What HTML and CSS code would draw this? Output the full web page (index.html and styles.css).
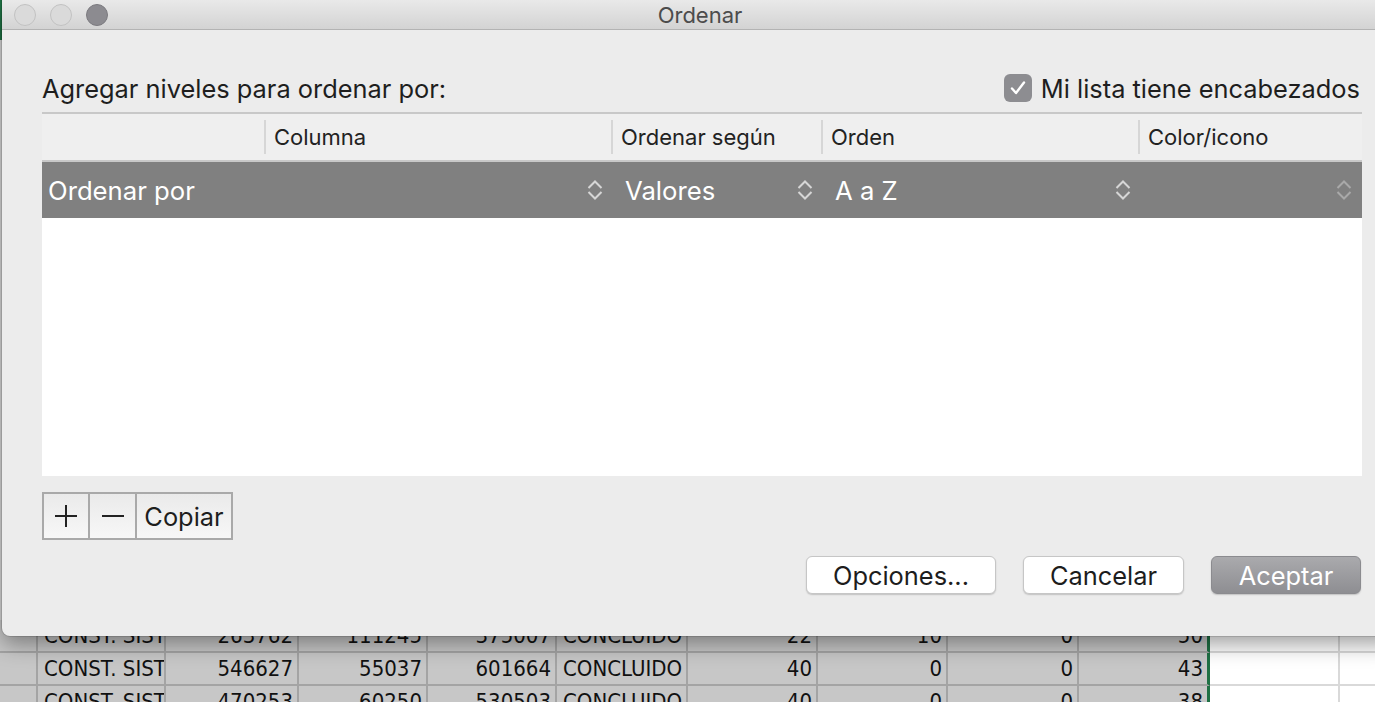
FILE: index.html
```html
<!DOCTYPE html>
<html lang="es">
<head>
<meta charset="utf-8">
<title>Ordenar</title>
<link rel="stylesheet" href="styles.css">
</head>
<body>
<div class="sheet">
  <div class="grid-row">
    <div class="cell"></div>
    <div class="cell">CONST. SIST</div>
    <div class="cell num">263762</div>
    <div class="cell num">111245</div>
    <div class="cell num">375007</div>
    <div class="cell">CONCLUIDO</div>
    <div class="cell num">22</div>
    <div class="cell num">10</div>
    <div class="cell num">0</div>
    <div class="cell num edge">50</div>
    <div class="cell blank"></div>
    <div class="cell blank"></div>
  </div>
  <div class="grid-row">
    <div class="cell"></div>
    <div class="cell">CONST. SIST</div>
    <div class="cell num">546627</div>
    <div class="cell num">55037</div>
    <div class="cell num">601664</div>
    <div class="cell">CONCLUIDO</div>
    <div class="cell num">40</div>
    <div class="cell num">0</div>
    <div class="cell num">0</div>
    <div class="cell num edge">43</div>
    <div class="cell blank"></div>
    <div class="cell blank"></div>
  </div>
  <div class="grid-row">
    <div class="cell"></div>
    <div class="cell">CONST. SIST</div>
    <div class="cell num">470253</div>
    <div class="cell num">60250</div>
    <div class="cell num">530503</div>
    <div class="cell">CONCLUIDO</div>
    <div class="cell num">40</div>
    <div class="cell num">0</div>
    <div class="cell num">0</div>
    <div class="cell num edge">38</div>
    <div class="cell blank"></div>
    <div class="cell blank"></div>
  </div>
</div>

<div class="dialog">
  <div class="titlebar">
    <div class="lights">
      <span class="light"></span>
      <span class="light"></span>
      <span class="light dark"></span>
    </div>
    <div class="title">Ordenar</div>
    <div></div>
  </div>
  <div class="content">
    <div class="top-row">
      <span class="label">Agregar niveles para ordenar por:</span>
      <span class="check">
        <span class="box">
          <svg width="20" height="20" viewBox="0 0 20 20"><path d="M4 10.5 L8 15 L16 4.5" fill="none" stroke="#fff" stroke-width="2.4" stroke-linecap="round" stroke-linejoin="round"/></svg>
        </span>
        <span>Mi lista tiene encabezados</span>
      </span>
    </div>
    <div class="table">
      <div class="thead">
        <div class="th first"></div>
        <div class="th">Columna</div>
        <div class="th">Ordenar según</div>
        <div class="th">Orden</div>
        <div class="th">Color/icono</div>
      </div>
      <div class="trow">
        <div class="td first">
          <span>Ordenar por</span>
          <svg class="chev" width="16" height="22" viewBox="0 0 16 22"><path d="M1.5 9 L8 2.5 L14.5 9 M1.5 13 L8 19.5 L14.5 13" fill="none" stroke="currentColor" stroke-width="2"/></svg>
        </div>
        <div class="td">
          <span>Valores</span>
          <svg class="chev" width="16" height="22" viewBox="0 0 16 22"><path d="M1.5 9 L8 2.5 L14.5 9 M1.5 13 L8 19.5 L14.5 13" fill="none" stroke="currentColor" stroke-width="2"/></svg>
        </div>
        <div class="td third">
          <span>A a Z</span>
          <svg class="chev" width="16" height="22" viewBox="0 0 16 22"><path d="M1.5 9 L8 2.5 L14.5 9 M1.5 13 L8 19.5 L14.5 13" fill="none" stroke="currentColor" stroke-width="2"/></svg>
        </div>
        <div class="td last">
          <span></span>
          <svg class="chev dim" width="16" height="22" viewBox="0 0 16 22"><path d="M1.5 9 L8 2.5 L14.5 9 M1.5 13 L8 19.5 L14.5 13" fill="none" stroke="currentColor" stroke-width="2"/></svg>
        </div>
      </div>
      <div class="tbody"></div>
    </div>
    <div class="seg">
      <div class="seg-btn plus">
        <svg width="24" height="24" viewBox="0 0 24 24"><path d="M12 1 V23 M1 12 H23" stroke="#222" stroke-width="2"/></svg>
      </div>
      <div class="seg-btn minus">
        <svg width="24" height="24" viewBox="0 0 24 24"><path d="M1 12 H23" stroke="#222" stroke-width="2"/></svg>
      </div>
      <div class="seg-btn copy">Copiar</div>
    </div>
    <div class="actions">
      <div class="btn opt">Opciones...</div>
      <div class="btn cancel">Cancelar</div>
      <div class="btn primary">Aceptar</div>
    </div>
  </div>
</div>
</body>
</html>
```

FILE: styles.css
```css
html, body {
  margin: 0;
  padding: 0;
}

body {
  width: 1375px;
  height: 702px;
  overflow: hidden;
  position: relative;
  font-family: Inter, "Liberation Sans", sans-serif;
  background: #ffffff;
}

/* background spreadsheet */
.sheet {
  height: 702px;
  box-sizing: border-box;
  padding-top: 620px;
  background: linear-gradient(#1f7244 0, #1f7244 40px, #d8d8d8 40px, #d8d8d8 100%);
}

.grid-row {
  display: grid;
  grid-template-columns: 38px 128px 133px 129px 129px 131px 130px 130px 131px 131px 130px 130px;
  height: 33px;
}

.cell {
  box-sizing: border-box;
  border-right: 2px solid #a4a4a4;
  border-bottom: 2px solid #a4a4a4;
  background: #c7c7c7;
  font-family: "Liberation Sans Narrow", "DejaVu Sans Condensed", "Liberation Sans", sans-serif;
  font-size: 22px;
  line-height: 31px;
  padding: 0 4px 0 6px;
  overflow: hidden;
  white-space: nowrap;
  color: #111111;
}

.cell.num {
  text-align: right;
}

.cell.edge {
  border-right: 3px solid #1f7145;
}

.cell.blank {
  background: #ffffff;
  border-color: #d9d9d9;
}

/* dialog window */
.dialog {
  position: absolute;
  left: 2px;
  top: 0;
  width: 1396px;
  height: 636px;
  background: #ececec;
  border-radius: 0 0 8px 8px;
  box-shadow: 0 8px 22px rgba(0, 0, 0, 0.38), 0 0 0 1px rgba(0, 0, 0, 0.12);
  display: flex;
  flex-direction: column;
  overflow: hidden;
  color: #1e1e1e;
}

.titlebar {
  height: 29px;
  flex: none;
  border-bottom: 1px solid #b3b3b3;
  background: linear-gradient(#e9e9e9, #d3d3d3);
  display: grid;
  grid-template-columns: 1fr auto 1fr;
  align-items: center;
}

.lights {
  display: flex;
  gap: 14px;
  padding-left: 12px;
}

.light {
  width: 20px;
  height: 20px;
  border-radius: 50%;
  background: #dadada;
  border: 1px solid #c2c2c2;
}

.light.dark {
  background: #8c8b90;
  border-color: #7b7a7f;
}

.title {
  font-size: 22px;
  color: #4c4c4c;
}

.content {
  display: flex;
  flex-direction: column;
  padding: 0 36px 0 40px;
}

.top-row {
  display: flex;
  justify-content: space-between;
  align-items: center;
  height: 28px;
  margin: 44px 0 10px;
  font-size: 25.4px;
}

.check {
  display: flex;
  align-items: center;
  gap: 9px;
  margin-right: 2px;
}

.box {
  width: 28px;
  height: 28px;
  border-radius: 6px;
  background: #8d8d91;
  display: flex;
  align-items: center;
  justify-content: center;
}

.table {
  border-top: 2px solid #c8c8c8;
  display: flex;
  flex-direction: column;
}

.thead {
  display: grid;
  grid-template-columns: 222px 347px 210px 317px 224px;
  height: 46px;
  align-items: center;
  background: #efefef;
  border-bottom: 2px solid #c8c8c8;
  font-size: 22px;
  color: #222222;
}

.th {
  height: 34px;
  display: flex;
  align-items: center;
  padding-left: 8px;
  border-left: 2px solid #d6d6d6;
}

.th.first {
  border-left: none;
}

.trow {
  display: grid;
  grid-template-columns: 569px 210px 317px 224px;
  height: 56px;
  background: #808080;
  color: #ffffff;
  font-size: 25.7px;
}

.td {
  display: flex;
  align-items: center;
  justify-content: space-between;
  padding: 0 8px 0 14px;
}

.td.first {
  padding-left: 6px;
}

.td.third {
  padding-right: 7px;
}

.td.last {
  padding-right: 10px;
}

.chev {
  color: #d6d6d6;
}

.chev.dim {
  color: #a9a9a9;
}

.tbody {
  height: 258px;
  background: #ffffff;
}

.seg {
  align-self: flex-start;
  display: flex;
  margin-top: 16px;
  height: 44px;
  border: 2px solid #a9a9a9;
  background: linear-gradient(#eaeaea, #f7f7f7);
}

.seg-btn {
  display: flex;
  align-items: center;
  justify-content: center;
  font-size: 25.4px;
}

.seg-btn.plus {
  width: 44px;
}

.seg-btn.minus {
  width: 45px;
  border-left: 2px solid #a9a9a9;
}

.seg-btn.copy {
  width: 94px;
  border-left: 2px solid #a9a9a9;
}

.actions {
  display: flex;
  justify-content: flex-end;
  gap: 27px;
  margin-top: 16px;
  margin-right: 1px;
}

.btn {
  height: 38px;
  box-sizing: border-box;
  border-radius: 6px;
  background: #ffffff;
  border: 1px solid #c6c6c6;
  box-shadow: 0 1px 1.5px rgba(0, 0, 0, 0.18);
  font-size: 25.4px;
  display: flex;
  align-items: center;
  justify-content: center;
  color: #1d1d1d;
}

.btn.opt {
  width: 190px;
}

.btn.cancel {
  width: 161px;
}

.btn.primary {
  width: 150px;
  background: linear-gradient(#aaaaad, #8e8e92);
  border-color: #8b8b8f;
  color: #ffffff;
}
```
